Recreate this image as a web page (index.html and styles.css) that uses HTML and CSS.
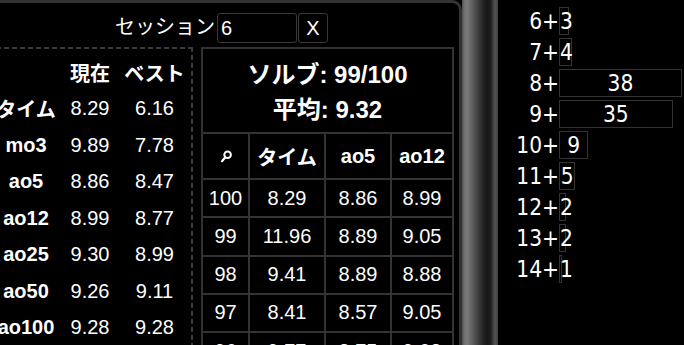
FILE: index.html
```html
<!DOCTYPE html>
<html lang="ja">
<head>
<meta charset="utf-8">
<title>Session</title>
<link rel="stylesheet" href="styles.css">
</head>
<body>
<div class="app">
  <section class="panel">
    <div class="session-bar">
      <label class="session-label" for="session">セッション</label>
      <input class="session-input" id="session" type="text" value="6">
      <button class="session-close" type="button">X</button>
    </div>
    <div class="content">
      <div class="stats">
        <div class="stats-grid">
          <div class="sc head"></div><div class="sc head">現在</div><div class="sc head">ベスト</div>
          <div class="sc lbl">タイム</div><div class="sc">8.29</div><div class="sc">6.16</div>
          <div class="sc lbl">mo3</div><div class="sc">9.89</div><div class="sc">7.78</div>
          <div class="sc lbl">ao5</div><div class="sc">8.86</div><div class="sc">8.47</div>
          <div class="sc lbl">ao12</div><div class="sc">8.99</div><div class="sc">8.77</div>
          <div class="sc lbl">ao25</div><div class="sc">9.30</div><div class="sc">8.99</div>
          <div class="sc lbl">ao50</div><div class="sc">9.26</div><div class="sc">9.11</div>
          <div class="sc lbl">ao100</div><div class="sc">9.28</div><div class="sc">9.28</div>
        </div>
      </div>
      <div class="times">
        <div class="summary">
          <div>ソルブ: 99/100</div>
          <div>平均: 9.32</div>
        </div>
        <div class="tc th"><svg class="search-icon" width="12" height="14" viewBox="0 0 12 14"><circle cx="7.6" cy="4.8" r="3.3" fill="none" stroke="#fff" stroke-width="2"/><path d="M5.3 7.3 L2 11.2" stroke="#fff" stroke-width="2.2" stroke-linecap="round"/></svg></div>
        <div class="tc th">タイム</div>
        <div class="tc th">ao5</div>
        <div class="tc th">ao12</div>
        <div class="tc">100</div><div class="tc">8.29</div><div class="tc">8.86</div><div class="tc">8.99</div>
        <div class="tc">99</div><div class="tc">11.96</div><div class="tc">8.89</div><div class="tc">9.05</div>
        <div class="tc">98</div><div class="tc">9.41</div><div class="tc">8.89</div><div class="tc">8.88</div>
        <div class="tc">97</div><div class="tc">8.41</div><div class="tc">8.57</div><div class="tc">9.05</div>
        <div class="tc">96</div><div class="tc">9.77</div><div class="tc">8.75</div><div class="tc">9.08</div>
      </div>
    </div>
  </section>
  <div class="splitter"></div>
  <section class="histogram">
    <div class="hist-label">6+</div><div class="hist-bar" style="width:9.7px">3</div>
    <div class="hist-label">7+</div><div class="hist-bar" style="width:13px">4</div>
    <div class="hist-label">8+</div><div class="hist-bar" style="width:123px">38</div>
    <div class="hist-label">9+</div><div class="hist-bar" style="width:113.6px">35</div>
    <div class="hist-label">10+</div><div class="hist-bar" style="width:29.2px">9</div>
    <div class="hist-label">11+</div><div class="hist-bar" style="width:16.4px">5</div>
    <div class="hist-label">12+</div><div class="hist-bar" style="width:6.6px">2</div>
    <div class="hist-label">13+</div><div class="hist-bar" style="width:6.6px">2</div>
    <div class="hist-label">14+</div><div class="hist-bar" style="width:3.3px">1</div>
  </section>
</div>
</body>
</html>
```

FILE: styles.css
```css
* { box-sizing: border-box; }

html, body {
  margin: 0;
  padding: 0;
  background: #000;
}

body {
  width: 684px;
  height: 345px;
  overflow: hidden;
  color: #fff;
  font-family: "Liberation Sans", "Noto Sans CJK JP", sans-serif;
  font-size: 20px;
}

.app {
  display: flex;
  height: 345px;
  margin-left: -12px;
}

.panel {
  flex: 0 0 474px;
  display: flex;
  flex-direction: column;
  border-top: 3px solid #333;
  border-right: 3px solid #333;
  border-top-right-radius: 10px;
  padding-right: 5px;
  overflow: hidden;
}

.session-bar {
  display: flex;
  align-items: center;
  height: 44px;
  padding: 10px 0 4px 127px;
  flex: none;
}

.session-label {
  margin-right: 2px;
  line-height: 30px;
  margin-top: -3px;
}

.session-input {
  width: 80px;
  height: 30px;
  margin: 0;
  padding: 0 0 0 3px;
  border: 1px solid #383838;
  border-radius: 3px;
  background: #000;
  color: #fff;
  font: 20px "Liberation Sans", sans-serif;
  outline: none;
}

.session-close {
  width: 30px;
  height: 30px;
  margin: 0 0 0 1px;
  padding: 0;
  border: 1px solid #383838;
  border-radius: 3px;
  background: #000;
  color: #fff;
  font: 20px "Liberation Sans", sans-serif;
}

.content {
  display: flex;
  align-items: flex-start;
  gap: 8px;
}

.stats {
  width: 205px;
  height: 330px;
  flex: none;
  padding: 7px 2px 0 2px;
  background-image:
    repeating-linear-gradient(to right, #3a3a3a 0 5px, transparent 5px 8px),
    repeating-linear-gradient(to bottom, #3a3a3a 0 5px, transparent 5px 8px);
  background-size: 100% 2px, 2px 100%;
  background-position: left top, right top;
  background-repeat: no-repeat;
}

.stats-grid {
  display: grid;
  grid-template-columns: 72px 56px 73px;
  grid-auto-rows: 36.5px;
  align-items: center;
  text-align: center;
}

.sc.head,
.sc.lbl {
  font-weight: bold;
}

.times {
  width: 253px;
  flex: none;
  display: grid;
  grid-template-columns: 45px 74px 64px 60px;
  grid-template-rows: 83px 44px;
  grid-auto-rows: 36.25px;
  gap: 2px;
  padding: 2px;
  background: #333;
}

.summary {
  grid-column: 1 / -1;
  background: #000;
  text-align: center;
  font-size: 24px;
  font-weight: bold;
  line-height: 35px;
  padding-top: 8px;
}

.tc {
  background: #000;
  display: flex;
  align-items: center;
  justify-content: center;
}

.tc.th {
  font-weight: bold;
}

.search-icon {
  display: block;
  margin-top: 2px;
}

.splitter {
  flex: 0 0 36px;
  background: linear-gradient(to right,
    #4a4a4a 0,
    #6e6e6e 2px,
    #7a7a7a 5px,
    #666 9px,
    #444 15px,
    #242424 21px,
    #151515 26px,
    #222 29px,
    #4a4a4a 32px,
    #555 34px,
    #3a3a3a 36px);
}

.histogram {
  flex: 1;
  display: grid;
  grid-template-columns: 61px 1fr;
  grid-auto-rows: 28px;
  row-gap: 3px;
  align-content: start;
  align-items: center;
  padding-top: 7px;
  font-family: "DejaVu Sans Condensed", "DejaVu Sans", sans-serif;
  font-stretch: condensed;
  font-size: 22.5px;
}

.hist-label {
  text-align: right;
  line-height: 28px;
}

.hist-bar {
  justify-self: start;
  height: 28px;
  border: 1px solid #333;
  line-height: 26px;
  text-align: center;
  white-space: nowrap;
}
```
